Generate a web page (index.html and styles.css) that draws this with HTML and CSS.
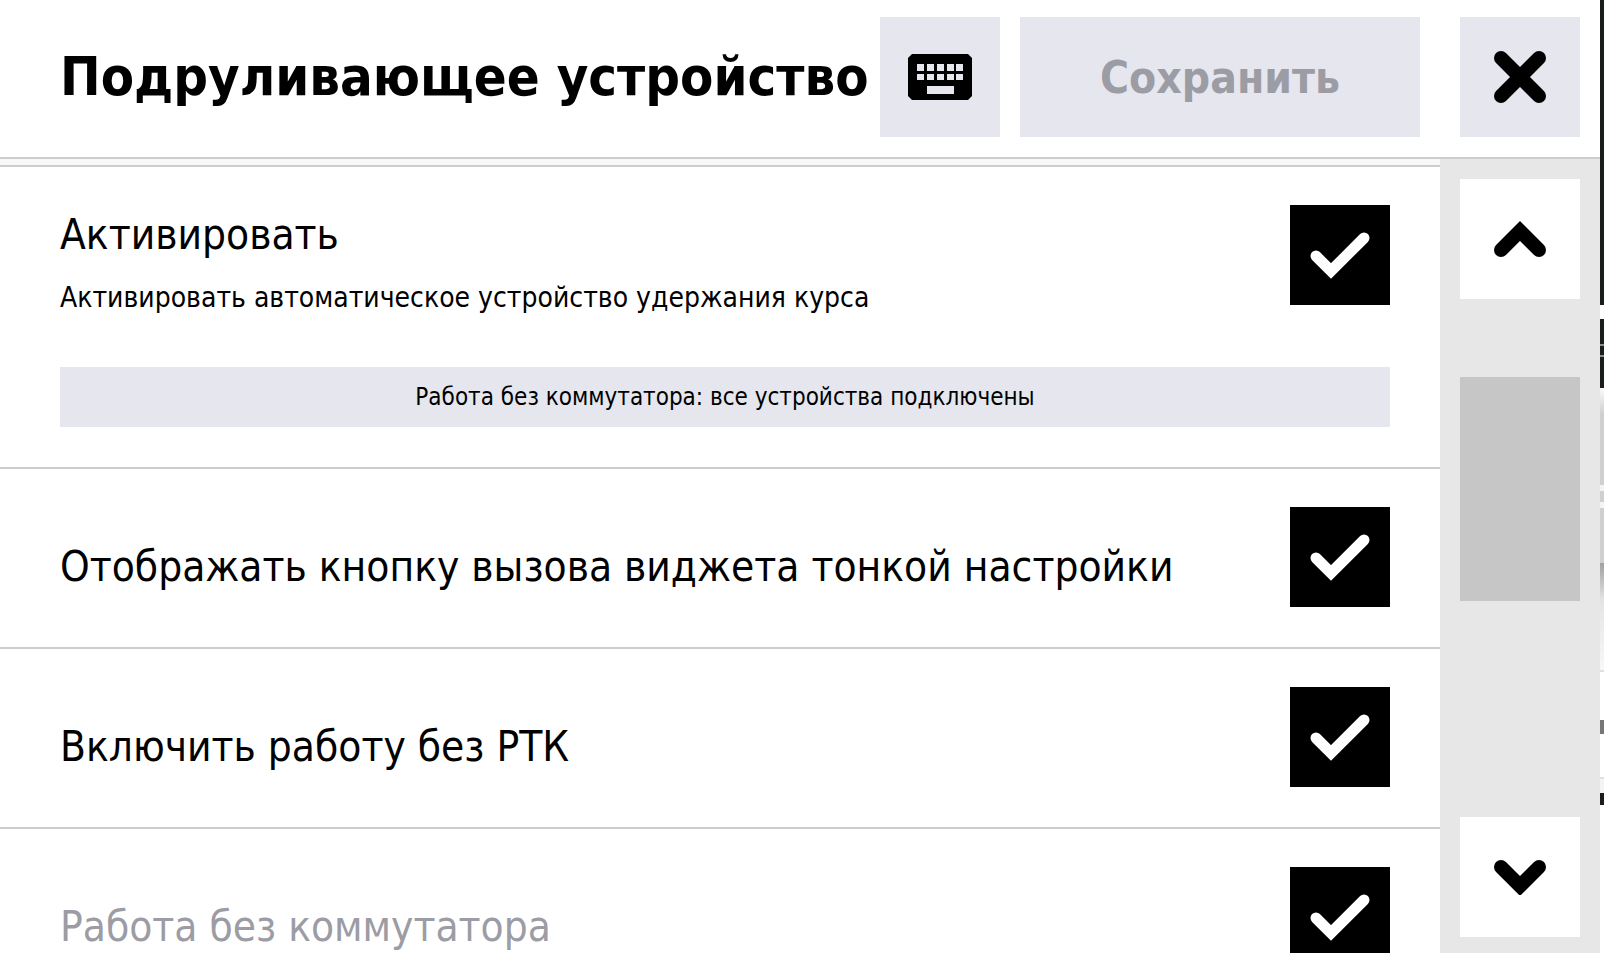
FILE: index.html
```html
<!DOCTYPE html>
<html lang="ru">
<head>
    <meta charset="UTF-8">
    <meta name="viewport" content="width=device-width, initial-scale=1.0">
    <title>Подруливающее устройство</title>
    <link rel="stylesheet" href="styles.css">
</head>
<body>
<div class="screen">
    <div class="window">
        <header class="header">
            <h1>Подруливающее устройство</h1>
            <button type="button" class="btn btn-icon" aria-label="Клавиатура">
                <svg width="64" height="46" viewBox="0 0 64 46">
                    <path d="M4 0H60L64 4V42L60 46H4L0 42V4Z" fill="#000"/>
                    <path d="M9 10h7v7h-7zM19 10h7v7h-7zM29 10h7v7h-7zM39 10h7v7h-7zM48 10h7v7h-7zM9 20h7v6h-7zM19 20h7v6h-7zM29 20h7v6h-7zM39 20h7v6h-7zM48 20h7v6h-7zM19 32h27v8H19z" fill="#e5e6ee"/>
                </svg>
            </button>
            <button type="button" class="btn btn-save" disabled>Сохранить</button>
            <button type="button" class="btn btn-icon btn-close" aria-label="Закрыть">
                <svg width="52" height="52" viewBox="0 0 52 52">
                    <path d="M7 7L45 45M45 7L7 45" class="stroke"/>
                </svg>
            </button>
        </header>
        <div class="content">
            <main class="settings">
                <section class="row">
                    <div class="row-main">
                        <div class="text">
                            <label for="activate" class="label">Активировать</label>
                            <p class="hint">Активировать автоматическое устройство удержания курса</p>
                        </div>
                        <input type="checkbox" id="activate" class="check" checked>
                    </div>
                    <div class="status">Работа без коммутатора: все устройства подключены</div>
                </section>
                <section class="row">
                    <div class="row-main">
                        <label for="widget" class="label single">Отображать кнопку вызова виджета тонкой настройки</label>
                        <input type="checkbox" id="widget" class="check" checked>
                    </div>
                </section>
                <section class="row">
                    <div class="row-main">
                        <label for="rtk" class="label single">Включить работу без РТК</label>
                        <input type="checkbox" id="rtk" class="check" checked>
                    </div>
                </section>
                <section class="row">
                    <div class="row-main">
                        <label for="noswitch" class="label single muted">Работа без коммутатора</label>
                        <input type="checkbox" id="noswitch" class="check" checked>
                    </div>
                </section>
            </main>
            <div class="scroll">
                <button type="button" class="scroll-btn" aria-label="Вверх">
                    <svg width="52" height="36" viewBox="0 0 52 36">
                        <path d="M7 29L26 10L45 29" class="stroke"/>
                    </svg>
                </button>
                <div class="track">
                    <div class="thumb"></div>
                </div>
                <button type="button" class="scroll-btn" aria-label="Вниз">
                    <svg width="52" height="36" viewBox="0 0 52 36">
                        <path d="M7 8L26 27L45 8" class="stroke"/>
                    </svg>
                </button>
            </div>
        </div>
    </div>
    <div class="backdrop"></div>
</div>
</body>
</html>
```
FILE: styles.css
```css
* {
    box-sizing: border-box;
}

body {
    font-family: Tahoma, 'DejaVu Sans Condensed', 'DejaVu Sans', sans-serif;
    margin: 0;
    background: #fff;
    color: #000;
}

.screen {
    display: flex;
    height: 100vh;
    overflow: hidden;
}

.window {
    flex: 1;
    display: flex;
    flex-direction: column;
    min-width: 0;
}

/* edge of the app behind the window */
.backdrop {
    width: 4px;
    background: linear-gradient(
        #1a1d1e 0 305px,
        #fff 305px 319px,
        #1a1d1e 319px 344px,
        #8c8c8c 344px 346px,
        #1a1d1e 346px 355px,
        #8c8c8c 355px 357px,
        #1a1d1e 357px 388px,
        #fafafa 388px,
        #cfcfcf 414px 485px,
        #f4f4f4 485px 491px,
        #cfcfcf 491px 502px,
        #f4f4f4 502px 508px,
        #cfcfcf 508px 563px,
        #a0a0a0 563px,
        #e4e4e4 600px,
        #f8f8f8 670px,
        #e0e0e0 670px 672px,
        #fff 672px 720px,
        #777 720px 734px,
        #fff 734px 777px,
        #e0e0e0 777px 779px,
        #f4f4f4 779px 793px,
        #1a1d1e 793px 805px,
        #fff 805px
    );
}

.header {
    display: flex;
    align-items: center;
    padding: 17px 20px 20px 60px;
    border-bottom: 2px solid #cdcdcd;
}

h1 {
    flex: 1;
    min-width: 0;
    margin: 0;
    font-size: 54px;
    line-height: 66px;
    white-space: nowrap;
}

.btn {
    flex: none;
    height: 120px;
    padding: 0;
    border: none;
    background: #e5e6ee;
    font-family: inherit;
    cursor: pointer;
}

.btn-icon {
    width: 120px;
}

.btn-save {
    width: 400px;
    margin-left: 20px;
    font-size: 44px;
    font-weight: bold;
    color: #9c9ca5;
}

.btn-close {
    margin-left: 40px;
}

.btn svg, .scroll-btn svg {
    display: block;
    margin: 0 auto;
}

.stroke {
    fill: none;
    stroke: #000;
    stroke-width: 14;
    stroke-linecap: round;
}

.content {
    flex: 1;
    display: flex;
    min-height: 0;
}

.settings {
    flex: 1;
    overflow: hidden;
    border-top: 6px solid #f8f8f8;
}

.row {
    padding: 38px 50px 40px 60px;
    border-bottom: 2px solid #cdcdcd;
}

.row:first-child {
    border-top: 2px solid #cdcdcd;
}

.row-main {
    display: flex;
    justify-content: space-between;
}

.text {
    padding-top: 4px;
}

.label {
    display: block;
    font-size: 42px;
    line-height: 52px;
}

.single {
    padding-top: 34px;
}

.muted {
    color: #9c9ca5;
}

.hint {
    margin: 20px 0 0;
    font-size: 28px;
    line-height: 34px;
}

.check {
    appearance: none;
    flex: none;
    width: 100px;
    height: 100px;
    margin: 0;
    background: #000;
    cursor: pointer;
}

.check:checked {
    background: #000 url("data:image/svg+xml,%3Csvg xmlns='http://www.w3.org/2000/svg' viewBox='0 0 100 100'%3E%3Cpath d='M26 51L41 66L74 33' fill='none' stroke='%23fff' stroke-width='11' stroke-linecap='round'/%3E%3C/svg%3E");
}

.status {
    margin-top: 52px;
    background: #e5e6ee;
    text-align: center;
    font-size: 24px;
    line-height: 60px;
}

.scroll {
    width: 160px;
    display: flex;
    flex-direction: column;
    padding: 20px 20px 16px;
    background: #e7e7e7;
}

.scroll-btn {
    height: 120px;
    padding: 0;
    border: none;
    background: #fff;
    cursor: pointer;
}

.track {
    flex: 1;
    padding: 78px 0;
}

.thumb {
    height: 224px;
    background: #c6c6c6;
}
```
